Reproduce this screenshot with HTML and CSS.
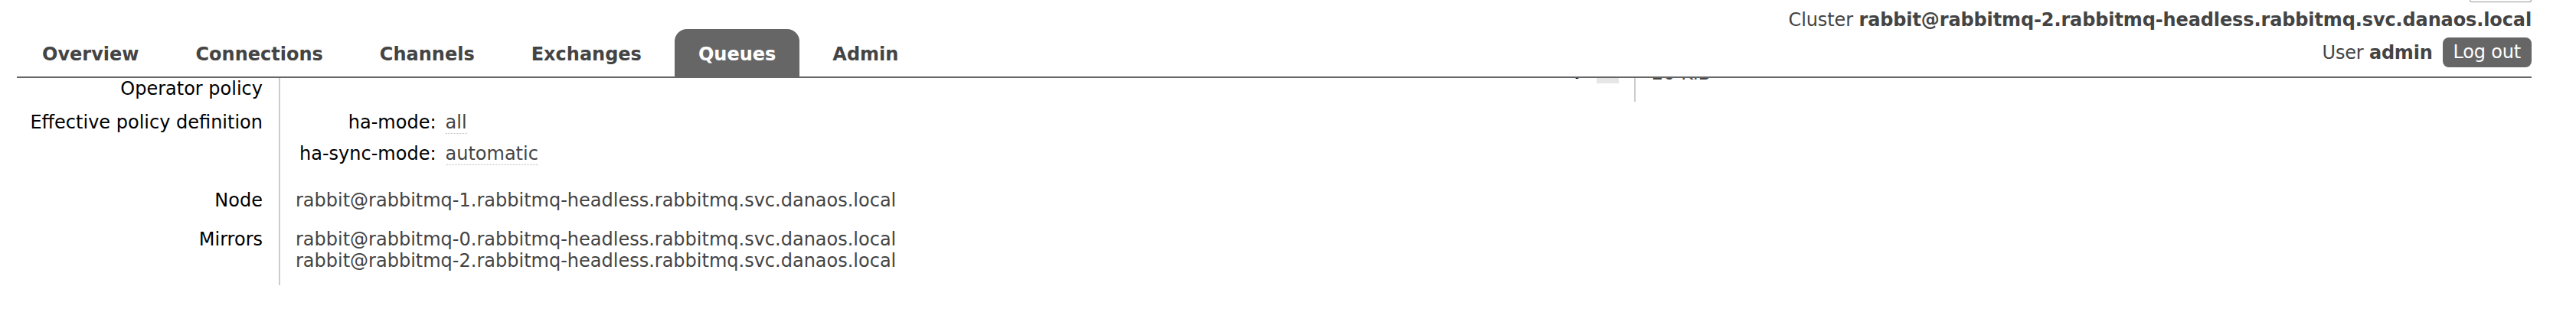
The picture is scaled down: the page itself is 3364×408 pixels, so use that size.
FILE: index.html
```html
<!DOCTYPE html>
<html>
<head>
<meta charset="utf-8">
<title>RabbitMQ Management</title>
<link rel="stylesheet" href="styles.css">
</head>
<body>
<div class="header">
  <ul class="menu">
    <li><a class="tab">Overview</a></li>
    <li><a class="tab">Connections</a></li>
    <li><a class="tab">Channels</a></li>
    <li><a class="tab">Exchanges</a></li>
    <li><a class="tab selected">Queues</a></li>
    <li><a class="tab">Admin</a></li>
  </ul>
  <div class="info">
    <div class="refresh-stub"></div>
    <div class="cluster">Cluster <b>rabbit@rabbitmq-2.rabbitmq-headless.rabbitmq.svc.danaos.local</b></div>
    <div class="user">
      <span>User <b>admin</b></span>
      <span class="logout">Log out</span>
    </div>
  </div>
</div>
<div class="main">
  <div class="col-left">
    <table class="facts">
      <tr><th>Operator policy</th><td></td></tr>
      <tr>
        <th>Effective policy definition</th>
        <td>
          <table class="mini">
            <tr><th>ha-mode:</th><td><span class="abbr">all</span></td></tr>
            <tr class="last"><th>ha-sync-mode:</th><td><span class="abbr">automatic</span></td></tr>
          </table>
        </td>
      </tr>
      <tr class="node-row"><th>Node</th><td>rabbit@rabbitmq-1.rabbitmq-headless.rabbitmq.svc.danaos.local</td></tr>
      <tr class="end-row"><th>Mirrors</th><td>rabbit@rabbitmq-0.rabbitmq-headless.rabbitmq.svc.danaos.local<br>rabbit@rabbitmq-2.rabbitmq-headless.rabbitmq.svc.danaos.local</td></tr>
    </table>
  </div>
  <table class="facts-r">
    <tr><th>Memory<span class="help"></span></th><td>20 KiB</td></tr>
  </table>
</div>
</body>
</html>
```
FILE: styles.css
```css
html, body {
  margin: 0;
  padding: 0;
  background: #fff;
  overflow: hidden;
}
body {
  font-family: "DejaVu Sans", Verdana, sans-serif;
  font-size: 24px;
  line-height: 28px;
  color: #444;
}
.header {
  position: relative;
  z-index: 2;
  background: #fff;
  margin: 0 58px 0 22px;
  height: 100px;
  border-bottom: 2px solid #666;
  display: flex;
  justify-content: space-between;
  align-items: flex-end;
}
.menu {
  list-style: none;
  margin: 0;
  padding: 0 0 0 2px;
  display: flex;
  gap: 12px;
}
.tab {
  display: block;
  padding: 19px 31px 15px 31px;
  font-weight: bold;
  color: #444;
  border-radius: 16px 16px 0 0;
}
.tab.selected {
  background: #666;
  color: #fff;
}
.info {
  display: flex;
  flex-direction: column;
  align-items: flex-end;
  padding-bottom: 12px;
}
.refresh-stub {
  box-sizing: border-box;
  width: 81px;
  height: 3px;
  border: 1px solid #999;
  border-top: none;
  border-radius: 0 0 4px 4px;
}
.cluster {
  margin-top: 9px;
  white-space: nowrap;
  letter-spacing: -0.12px;
}
.user {
  margin-top: 9px;
  display: flex;
  align-items: center;
  gap: 13px;
  letter-spacing: -0.2px;
}
.logout {
  background: #666;
  color: #fff;
  padding: 5px 14px 6px;
  border-radius: 8px;
}
.main {
  display: flex;
  align-items: flex-start;
  margin-top: -8px;
  padding-left: 22px;
}
.col-left {
  width: 1700px;
}
.facts {
  border-collapse: collapse;
}
.facts > tbody > tr > th {
  width: 321px;
  padding: 8px 21px 8px 0;
  text-align: right;
  font-weight: normal;
  color: #000;
  vertical-align: top;
  border-right: 2px solid #ccc;
  white-space: nowrap;
}
.facts > tbody > tr > td {
  padding: 8px 0 8px 20px;
  vertical-align: top;
  color: #444;
  white-space: nowrap;
}
.facts > tbody > tr.node-row > th,
.facts > tbody > tr.node-row > td {
  padding-bottom: 15px;
}
.facts > tbody > tr.end-row > th,
.facts > tbody > tr.end-row > td {
  padding-bottom: 18px;
}
.mini {
  border-collapse: collapse;
}
.mini th {
  padding: 0 12px 13px 5px;
  text-align: right;
  font-weight: normal;
  color: #000;
  white-space: nowrap;
}
.mini td {
  padding: 0 0 13px 0;
  color: #444;
}
.mini tr.last th,
.mini tr.last td {
  padding-bottom: 17px;
}
.abbr {
  border-bottom: 1px dotted #bbb;
}
.facts-r {
  border-collapse: collapse;
  margin-top: -18px;
}
.facts-r th {
  width: 392px;
  padding: 0 20px 24px 0;
  text-align: right;
  font-weight: normal;
  color: #000;
  vertical-align: top;
  border-right: 2px solid #ccc;
  white-space: nowrap;
}
.facts-r td {
  padding: 6px 0 18px 21px;
  vertical-align: top;
  color: #444;
  white-space: nowrap;
}
.help {
  display: inline-block;
  width: 29px;
  height: 22px;
  margin-left: 15px;
  background: #e6e6e6;
  vertical-align: -11px;
}
```
